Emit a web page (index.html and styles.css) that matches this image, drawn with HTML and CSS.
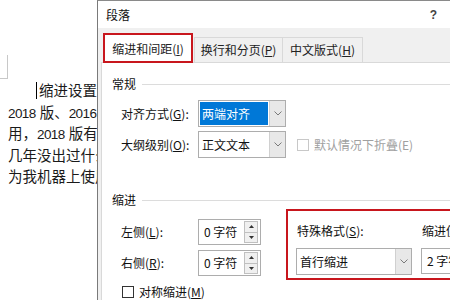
FILE: index.html
```html
<!DOCTYPE html>
<html lang="zh-CN">

<head>
    <meta charset="UTF-8">
    <title>段落</title>
    <link rel="stylesheet" href="styles.css">
</head>

<body>
    <div class="screen">
        <div class="doc">
            <div class="doc-frame"></div>
            <div class="doc-text">
                <p class="first"><span class="caret"></span>缩进设置首行缩进</p>
                <p><span class="num">2018</span> 版、<span class="num">2016</span> 版和</p>
                <p>用，<span class="num">2018</span> 版有什么</p>
                <p>几年没出过什么问题</p>
                <p>为我机器上使用的</p>
            </div>
        </div>

        <div class="dialog">
            <div class="titlebar">
                <span>段落</span>
                <span class="help">?</span>
            </div>

            <div class="tabs">
                <div class="tab active"><span>缩进和间距(<u>I</u>)</span></div>
                <div class="tab second"><span>换行和分页(<u>P</u>)</span></div>
                <div class="tab third"><span>中文版式(<u>H</u>)</span></div>
            </div>

            <div class="panel">
                <div class="section-head"><span>常规</span></div>

                <div class="row first-row">
                    <label>对齐方式(<u>G</u>):</label>
                    <div class="select">
                        <span class="value selected">两端对齐</span>
                        <span class="arrow">
                            <svg viewBox="0 0 8 5" width="8" height="5"><polyline points="0.5 0.5 4 4 7.5 0.5" fill="none" stroke="#7a7a7a" stroke-width="1"></polyline></svg>
                        </span>
                    </div>
                </div>

                <div class="row">
                    <label>大纲级别(<u>O</u>):</label>
                    <div class="select">
                        <span class="value">正文文本</span>
                        <span class="arrow">
                            <svg viewBox="0 0 8 5" width="8" height="5"><polyline points="0.5 0.5 4 4 7.5 0.5" fill="none" stroke="#7a7a7a" stroke-width="1"></polyline></svg>
                        </span>
                    </div>
                    <div class="check disabled"><span class="box"></span><span>默认情况下折叠(E)</span></div>
                </div>

                <div class="section-head indent-head"><span>缩进</span></div>

                <div class="indent">
                    <div class="indent-left">
                        <div class="row spin-row">
                            <label>左侧(<u>L</u>):</label>
                            <div class="spin">
                                <span class="spin-value">0 字符</span>
                                <span class="spin-btns">
                                    <span class="spin-btn"><svg viewBox="0 0 5 3" width="5" height="3"><polygon points="0 3 2.5 0 5 3" fill="#333"></polygon></svg></span>
                                    <span class="spin-btn"><svg viewBox="0 0 5 3" width="5" height="3"><polygon points="0 0 2.5 3 5 0" fill="#333"></polygon></svg></span>
                                </span>
                            </div>
                        </div>
                        <div class="row spin-row">
                            <label>右侧(<u>R</u>):</label>
                            <div class="spin">
                                <span class="spin-value">0 字符</span>
                                <span class="spin-btns">
                                    <span class="spin-btn"><svg viewBox="0 0 5 3" width="5" height="3"><polygon points="0 3 2.5 0 5 3" fill="#333"></polygon></svg></span>
                                    <span class="spin-btn"><svg viewBox="0 0 5 3" width="5" height="3"><polygon points="0 0 2.5 3 5 0" fill="#333"></polygon></svg></span>
                                </span>
                            </div>
                        </div>
                    </div>

                    <div class="special">
                        <div class="special-col">
                            <div class="special-label">特殊格式(<u>S</u>):</div>
                            <div class="select wide">
                                <span class="value">首行缩进</span>
                                <span class="arrow">
                                    <svg viewBox="0 0 8 5" width="8" height="5"><polyline points="0.5 0.5 4 4 7.5 0.5" fill="none" stroke="#7a7a7a" stroke-width="1"></polyline></svg>
                                </span>
                            </div>
                        </div>
                        <div class="special-col">
                            <div class="special-label">缩进值(<u>Y</u>):</div>
                            <div class="spin">
                                <span class="spin-value">2 字符</span>
                            </div>
                        </div>
                    </div>
                </div>

                <div class="check mirror"><span class="box"></span><span>对称缩进(<u>M</u>)</span></div>
            </div>
        </div>
    </div>
</body>

</html>
```

FILE: styles.css
```css
body {
    margin: 0;
    background: #fff;
}

.screen {
    display: flex;
    width: 450px;
    height: 300px;
    overflow: hidden;
}

/* document behind the dialog */
.doc {
    flex: none;
    width: 97px;
    overflow: hidden;
    font-family: 'Liberation Sans', 'Noto Sans CJK SC', sans-serif;
    font-size: 14.5px;
    color: #1a1a1a;
}

.doc-frame {
    width: 7px;
    height: 23px;
    margin-top: 55px;
    border-right: 1px solid #c8c8c8;
    border-bottom: 1px solid #c8c8c8;
}

.doc-text {
    margin-top: 2px;
}

.doc-text p {
    margin: 0;
    padding-left: 8px;
    white-space: nowrap;
    line-height: 21.5px;
}

.doc-text .num {
    font-size: 13.5px;
    letter-spacing: -0.6px;
}

.doc-text .first {
    text-indent: 28px;
}

.caret {
    display: inline-block;
    width: 1px;
    height: 17px;
    margin-right: 2px;
    background: #000;
    vertical-align: -3px;
}

/* dialog */
.dialog {
    flex: none;
    width: 390px;
    display: flex;
    flex-direction: column;
    border-left: 1px solid #7a7a7a;
    border-top: 1px solid #8a8a8a;
    background: #f0f0f0;
    font-family: 'Noto Sans CJK SC', sans-serif;
    font-size: 12px;
    line-height: 16px;
    color: #111;
}

.titlebar {
    height: 29px;
    display: flex;
    align-items: center;
    padding: 0 51px 0 8px;
    background: #fff;
}

.help {
    margin-left: auto;
    font-family: 'Liberation Sans', sans-serif;
    font-weight: bold;
    font-size: 12px;
    color: #444;
}

.tabs {
    height: 36px;
    display: flex;
    align-items: flex-end;
    padding-left: 5px;
}

.tab {
    height: 25px;
    display: flex;
    align-items: center;
    justify-content: center;
    box-sizing: border-box;
    border: 1px solid #d9d9d9;
    border-bottom: none;
    color: #222;
}

.tab.active {
    position: relative;
    z-index: 1;
    width: 90px;
    height: 30px;
    margin-bottom: -1px;
    padding-top: 1px;
    border: 2px solid #c8161d;
    background: #fff;
}

.tab.second {
    width: 89px;
    margin-left: 1px;
}

.tab.third {
    width: 80px;
    border-left: none;
}

.panel {
    flex: 1;
    margin-left: 3px;
    padding-left: 10px;
    border-left: 1px solid #d9d9d9;
    border-top: 1px solid #d9d9d9;
    background: #fff;
}

.section-head {
    display: flex;
    align-items: center;
    height: 16px;
    margin-top: 13px;
}

.section-head::after {
    content: '';
    flex: 1;
    height: 1px;
    margin-left: 6px;
    background: #dcdcdc;
}

.row {
    display: flex;
    align-items: center;
    height: 27px;
    margin-top: 4px;
    padding-left: 9px;
}

.row.first-row {
    margin-top: 8px;
}

.row label {
    width: 77px;
    flex: none;
}

.select {
    flex: none;
    width: 88px;
    height: 27px;
    display: flex;
    box-sizing: border-box;
    border: 1px solid #adadad;
    background: #fff;
}

.select .value {
    flex: 1;
    display: flex;
    align-items: center;
    margin: 1px;
    padding-left: 2px;
}

.select .value.selected {
    background: #0078d7;
    color: #fff;
}

.select .arrow {
    width: 15px;
    display: flex;
    align-items: center;
    justify-content: center;
    border-left: 1px solid #d0d0d0;
    background: #e8e8e8;
}

.check {
    display: flex;
    align-items: center;
    gap: 5px;
    margin-left: 11px;
}

.check .box {
    width: 10px;
    height: 10px;
    border: 1px solid #333;
    background: #fff;
}

.check.disabled {
    color: #a0a0a0;
}

.check.disabled .box {
    border-color: #c8c8c8;
}

.indent-head {
    margin-top: 34px;
}

.indent {
    display: flex;
    align-items: flex-start;
    margin-top: 1px;
}

.indent-left {
    padding-top: 10px;
}

.row.spin-row {
    height: 26px;
    margin-top: 5px;
}

.row.spin-row:first-child {
    margin-top: 0;
}

.spin {
    flex: none;
    width: 63px;
    height: 26px;
    display: flex;
    align-items: center;
    box-sizing: border-box;
    padding: 2px 2px 2px 5px;
    border: 1px solid #adadad;
    background: #fff;
}

.spin-value {
    flex: 1;
}

.spin-btns {
    width: 12px;
    height: 20px;
    display: flex;
    flex-direction: column;
    border: 1px solid #c0c0c0;
}

.spin-btn {
    flex: 1;
    display: flex;
    align-items: center;
    justify-content: center;
    background: #f0f0f0;
}

.spin-btn + .spin-btn {
    border-top: 1px solid #c0c0c0;
}

.special {
    display: flex;
    gap: 9px;
    margin-left: 25px;
    padding: 12px 0 3px 8px;
    border: 2px solid #c8161d;
}

.special-label {
    height: 16px;
    margin-bottom: 9px;
    padding-left: 1px;
}

.select.wide {
    width: 116px;
}

.check.mirror {
    margin: 4px 0 0 10px;
}
```
